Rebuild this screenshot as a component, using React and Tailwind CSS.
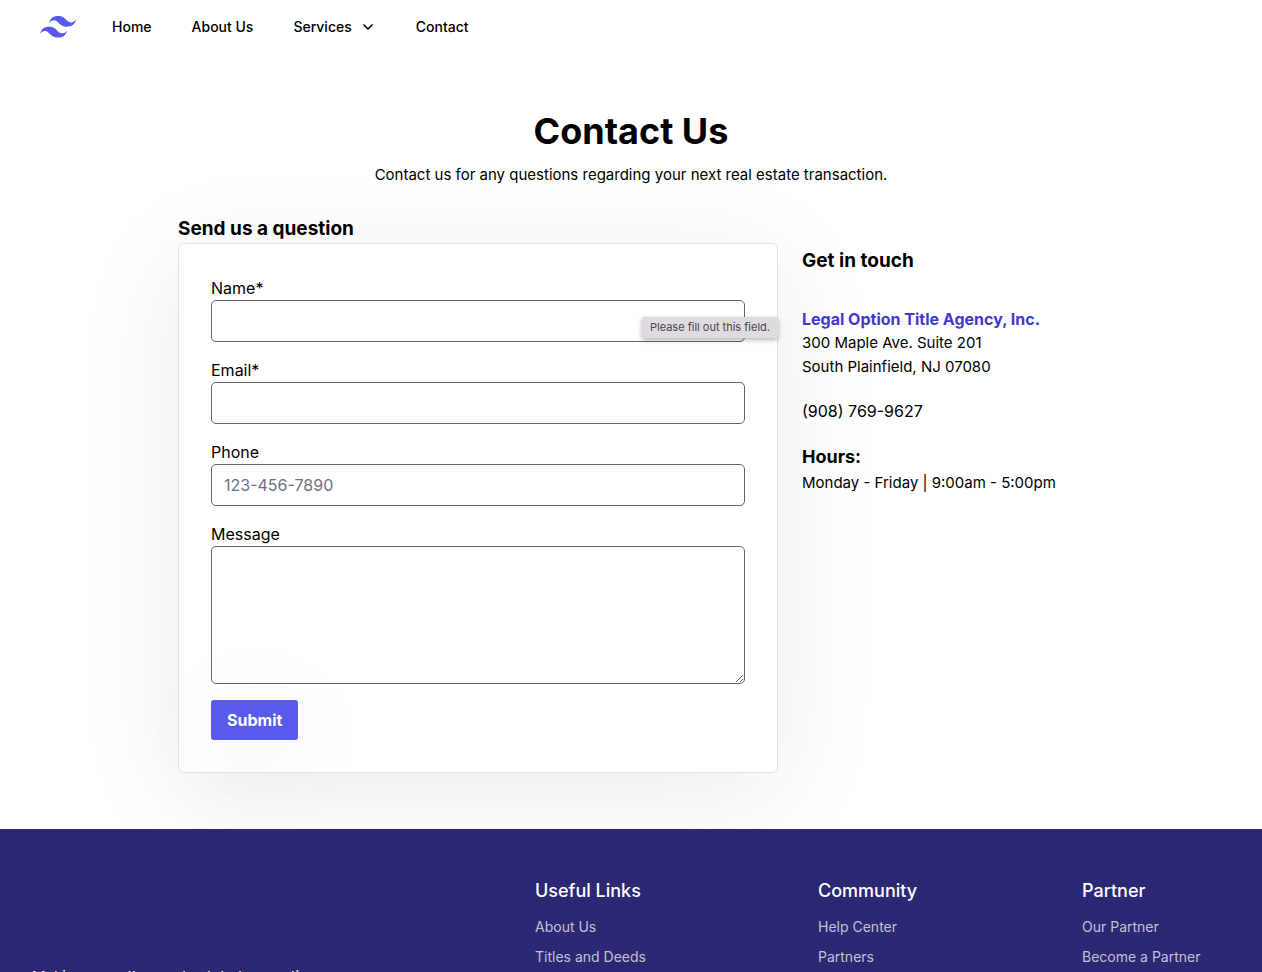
import React from "react";
import { ChevronDown } from "lucide-react";

const footerColumns = [
  { title: "Useful Links", links: ["About Us", "Titles and Deeds"] },
  { title: "Community", links: ["Help Center", "Partners"] },
  { title: "Partner", links: ["Our Partner", "Become a Partner"] },
];

const fieldClass =
  "block w-full rounded-[5px] border border-[#5f6673] bg-transparent px-3 text-base leading-6 text-black placeholder:text-[#6b7280] focus:outline-none";

function Logo() {
  return (
    <svg className="h-[22px] w-9" viewBox="0 0 54 33" fill="#585aeb" aria-hidden="true">
      <path d="M27 0c-7.2 0-11.7 3.6-13.5 10.8 2.7-3.6 5.85-4.95 9.45-4.05 2.054.513 3.522 2.004 5.147 3.653C30.744 13.09 33.808 16.2 40.5 16.2c7.2 0 11.7-3.6 13.5-10.8-2.7 3.6-5.85 4.95-9.45 4.05-2.054-.513-3.522-2.004-5.147-3.653C36.756 3.11 33.692 0 27 0zM13.5 16.2C6.3 16.2 1.8 19.8 0 27c2.7-3.6 5.85-4.95 9.45-4.05 2.054.514 3.522 2.004 5.147 3.653C17.244 29.29 20.308 32.4 27 32.4c7.2 0 11.7-3.6 13.5-10.8-2.7 3.6-5.85 4.95-9.45 4.05-2.054-.513-3.522-2.004-5.147-3.653C23.256 19.31 20.192 16.2 13.5 16.2z" />
    </svg>
  );
}

function Header() {
  return (
    <header className="flex h-[54px] items-center px-10 text-sm font-medium">
      <a href="#home" aria-label="Home page">
        <Logo />
      </a>
      <nav className="ml-9 flex items-center gap-10">
        <a href="#home">Home</a>
        <a href="#about">About Us</a>
        <button type="button" className="flex items-center gap-2">
          Services
          <ChevronDown className="size-4" strokeWidth={2.5} />
        </button>
        <a href="#contact">Contact</a>
      </nav>
    </header>
  );
}

function ContactForm() {
  return (
    <form className="rounded-md border border-[#e2e2e8] bg-white p-8 shadow-[0_20px_110px_rgba(0,0,0,0.08)]">
      <div className="relative">
        <label htmlFor="name" className="block">Name*</label>
        <input id="name" name="name" type="text" required className={`${fieldClass} h-[42px]`} />
        <div
          role="tooltip"
          className="absolute -right-[33px] bottom-1 rounded-[2px] bg-[#e0dae1] px-2 text-[11px] leading-[21px] whitespace-nowrap text-[#48444a] shadow-[0_2px_5px_rgba(0,0,0,0.3)]"
        >
          Please fill out this field.
        </div>
      </div>
      <div className="mt-4">
        <label htmlFor="email" className="block">Email*</label>
        <input id="email" name="email" type="email" required className={`${fieldClass} h-[42px]`} />
      </div>
      <div className="mt-4">
        <label htmlFor="phone" className="block">Phone</label>
        <input id="phone" name="phone" type="tel" placeholder="123-456-7890" className={`${fieldClass} h-[42px]`} />
      </div>
      <div className="mt-4">
        <label htmlFor="message" className="block">Message</label>
        <textarea id="message" name="message" className={`${fieldClass} h-[138px] py-2`} />
      </div>
      <button
        type="submit"
        className="mt-4 h-10 rounded-[3px] bg-[#585aeb] px-4 font-bold text-white shadow-[0_20px_110px_rgba(0,0,0,0.08)]"
      >
        Submit
      </button>
    </form>
  );
}

function ContactDetails() {
  return (
    <address className="flex-1 pt-8 text-[15px] leading-6 not-italic">
      <h2 className="text-[19px] leading-7 font-bold">Get in touch</h2>
      <h3 className="mt-8 text-base leading-6 font-bold text-[#4338ca]">Legal Option Title Agency, Inc.</h3>
      <p>300 Maple Ave. Suite 201</p>
      <p>South Plainfield, NJ 07080</p>
      <p className="mt-5 text-base">(908) 769-9627</p>
      <h3 className="mt-5 text-lg leading-7 font-bold">Hours:</h3>
      <p>Monday - Friday | 9:00am - 5:00pm</p>
    </address>
  );
}

function Footer() {
  return (
    <footer className="relative grid grid-cols-[503fr_283fr_264fr_148fr] bg-[#2c2873] px-8 pt-12 pb-4 text-white">
      <p className="pt-[88px] text-[15px] leading-6 whitespace-nowrap">Making smoother real estate transactions</p>
      {footerColumns.map((column) => (
        <nav key={column.title} aria-label={column.title}>
          <h4 className="text-lg leading-7 font-medium">{column.title}</h4>
          <ul className="mt-3 space-y-2.5 text-sm leading-5 text-[#c3c1d8]">
            {column.links.map((link) => (
              <li key={link}>
                <a href="#footer" className="whitespace-nowrap">{link}</a>
              </li>
            ))}
          </ul>
        </nav>
      ))}
    </footer>
  );
}

export default function App() {
  return (
    <div className="min-h-screen bg-white font-['Inter',sans-serif] text-base text-black">
      <Header />
      <main className="mx-auto max-w-[906px] py-14">
        <div className="text-center">
          <h1 className="text-4xl leading-[42px] font-bold">Contact Us</h1>
          <p className="mt-[11px] text-[15px] leading-6">
            Contact us for any questions regarding your next real estate transaction.
          </p>
        </div>
        <div className="mt-7 flex gap-6">
          <section className="w-full max-w-[600px]">
            <h2 className="text-[19px] leading-7 font-bold">Send us a question</h2>
            <ContactForm />
          </section>
          <ContactDetails />
        </div>
      </main>
      <Footer />
    </div>
  );
}
